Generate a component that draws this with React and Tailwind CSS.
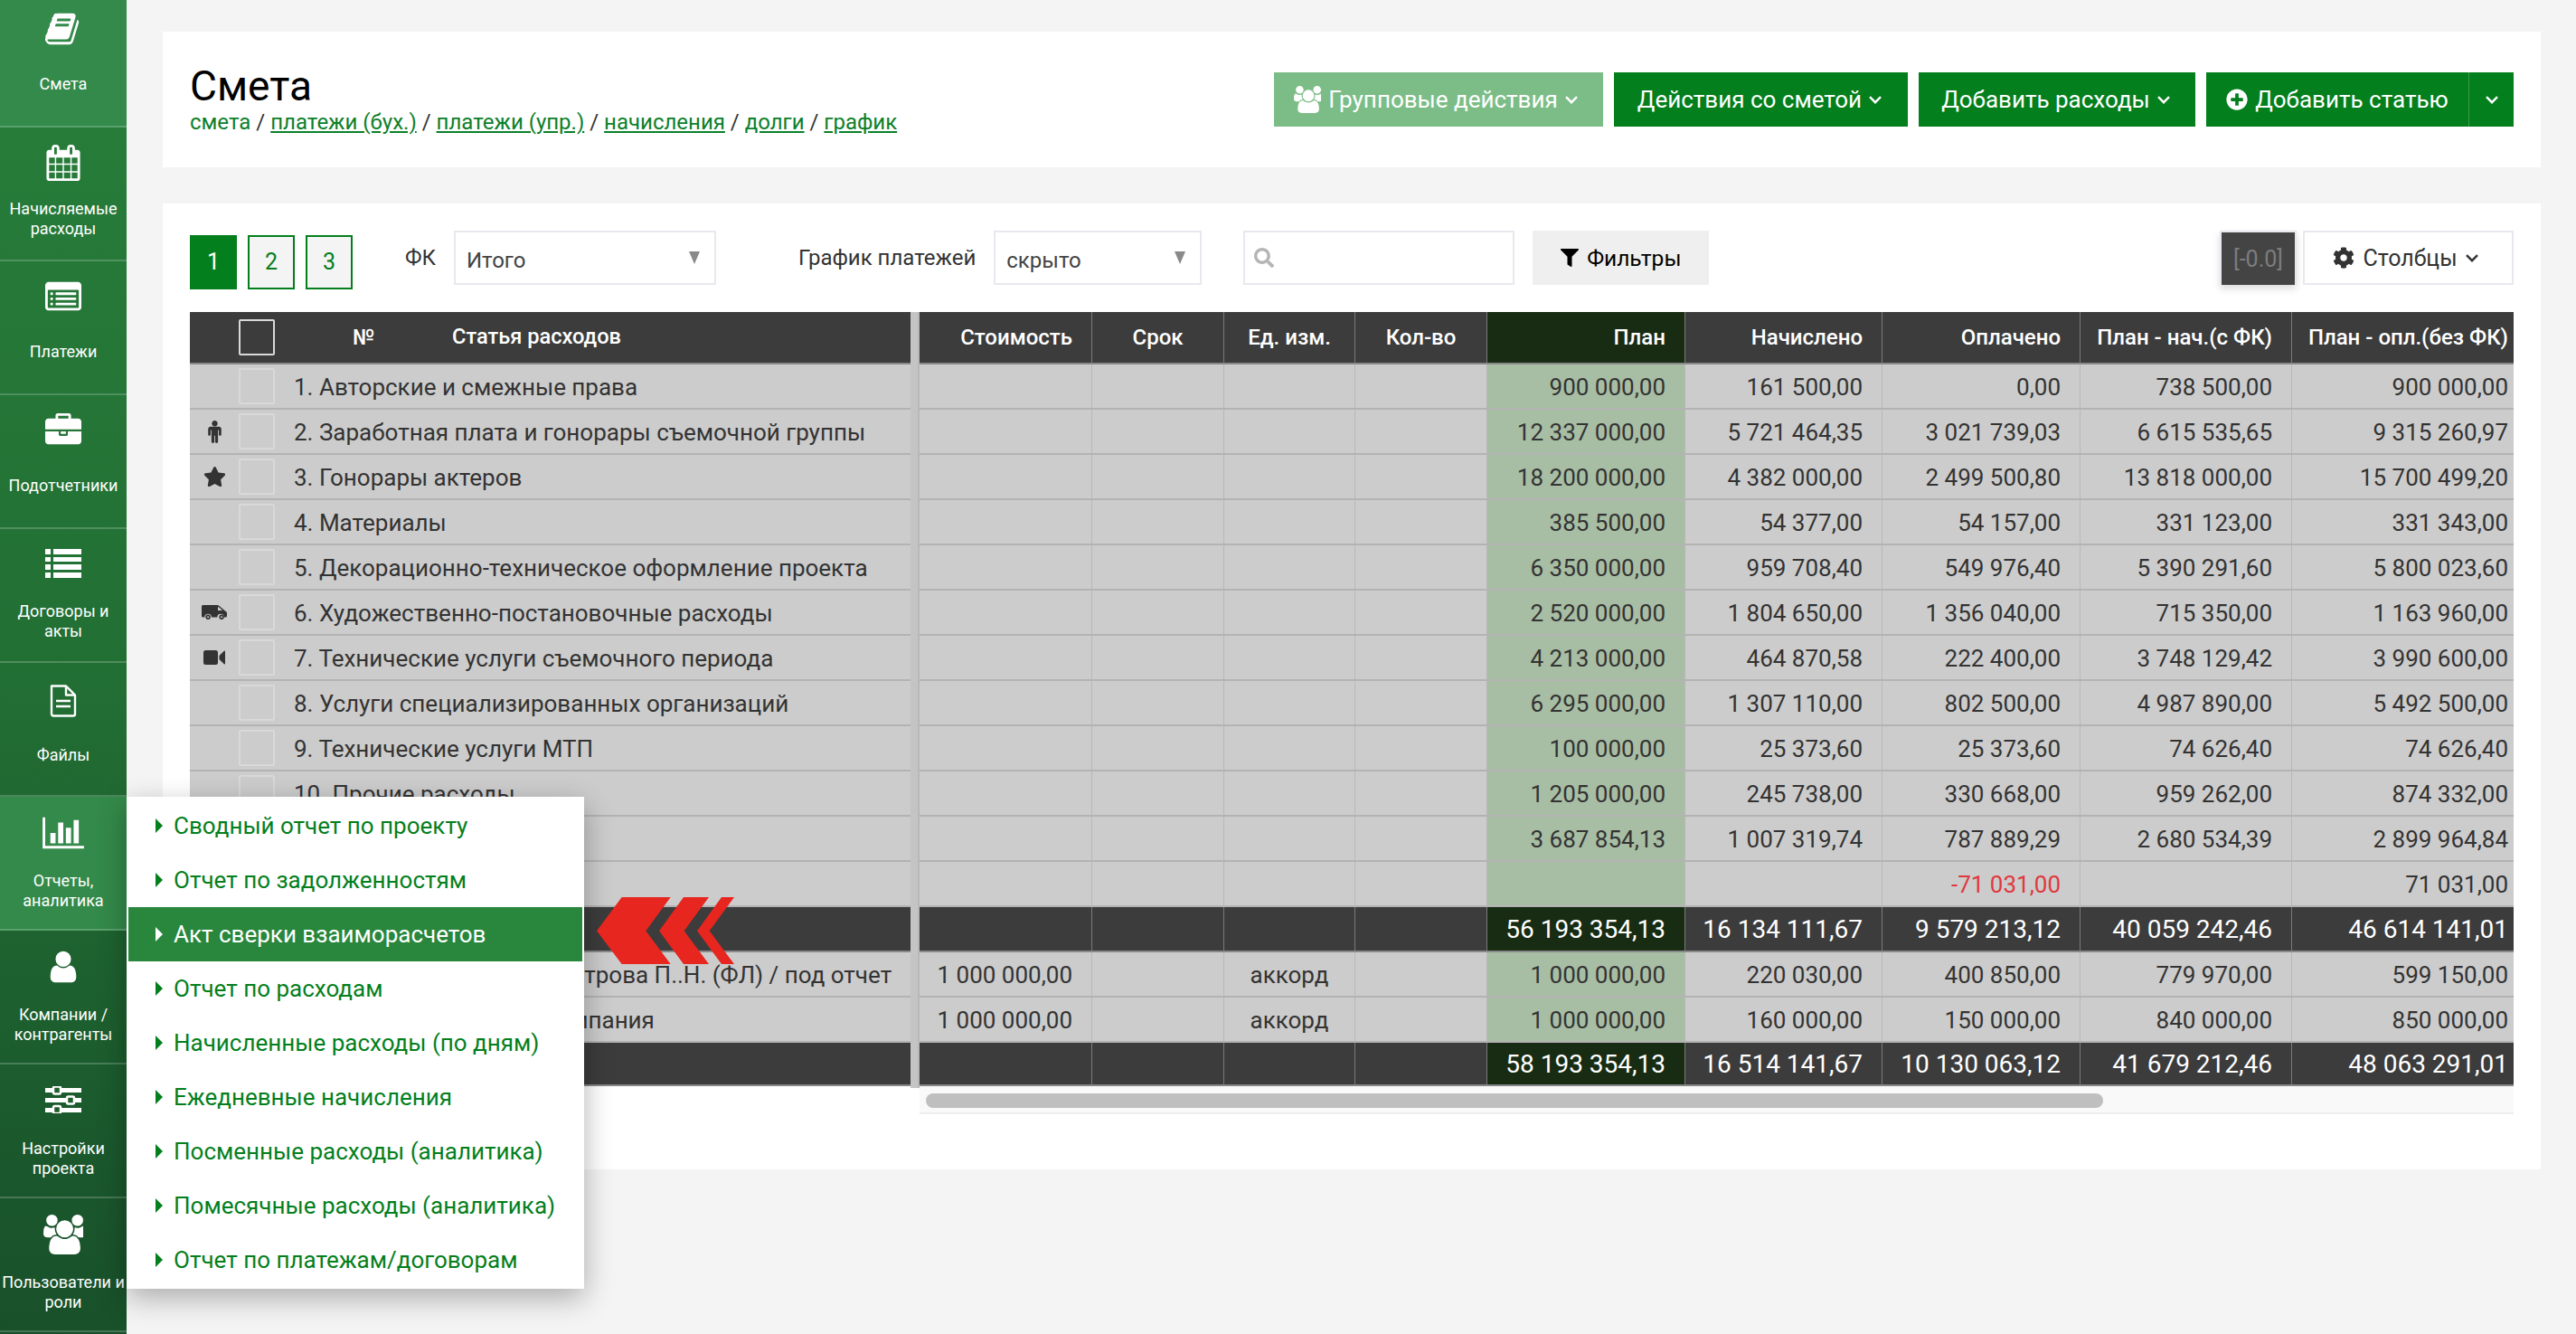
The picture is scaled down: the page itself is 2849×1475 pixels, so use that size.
import React from "react";
import { FaStar, FaFilter, FaCog, FaPlusCircle, FaSearch } from "react-icons/fa";

const P = {
  book: "M1639 478q40 57 18 129l-275 906q-19 64-76.5 107.5t-122.5 43.5h-923q-77 0-148.5-53.5t-99.5-131.5q-24-67-2-127 0-4 3-27t4-37q1-8-3-21.5t-3-19.5q2-11 8-21t16.5-23.5 16.5-23.5q23-38 45-91.5t30-91.5q3-10 .5-30t-.5-28q3-11 17-28t17-23q21-36 42-92t25-90q1-9-2.5-32t.5-28q4-13 22-30.5t22-22.5q19-26 42.5-84.5t27.5-96.5q1-8-3-25.5t-2-26.5q2-8 9-18t18-23 17-21q8-12 16.5-30.5t15-35 16-36 19.5-32 26.5-23.5 36-11.5 47.5 5.5l-1 3q38-9 51-9h761q74 0 114 56t18 130l-274 906q-36 119-71.5 153.5t-128.5 34.5h-869q-27 0-38 15-11 16-1 43 24 70 144 70h923q29 0 56-15.5t35-41.5l300-987q7-22 5-57 38 15 59 43zm-1064 2q-4 13 2 22.5t20 9.5h608q13 0 25.5-9.5t16.5-22.5l21-64q4-13-2-22.5t-20-9.5h-608q-13 0-25.5 9.5t-16.5 22.5zm-83 256q-4 13 2 22.5t20 9.5h608q13 0 25.5-9.5t16.5-22.5l21-64q4-13-2-22.5t-20-9.5h-608q-13 0-25.5 9.5t-16.5 22.5z",
  calendar: "M192 1664h288v-288h-288v288zm352 0h320v-288h-320v288zm-352-352h288v-320h-288v320zm352 0h320v-320h-320v320zm-352-384h288v-288h-288v288zm736 736h320v-288h-320v288zm-384-736h320v-288h-320v288zm768 736h288v-288h-288v288zm-384-352h320v-320h-320v320zm-352-864v-288q0-13-9.5-22.5t-22.5-9.5h-64q-13 0-22.5 9.5t-9.5 22.5v288q0 13 9.5 22.5t22.5 9.5h64q13 0 22.5-9.5t9.5-22.5zm736 864h288v-320h-288v320zm-384-384h320v-288h-320v288zm384 0h288v-288h-288v288zm32-480v-288q0-13-9.5-22.5t-22.5-9.5h-64q-13 0-22.5 9.5t-9.5 22.5v288q0 13 9.5 22.5t22.5 9.5h64q13 0 22.5-9.5t9.5-22.5zm384-64v1280q0 52-38 90t-90 38h-1408q-52 0-90-38t-38-90v-1280q0-52 38-90t90-38h128v-96q0-66 47-113t113-47h64q66 0 113 47t47 113v96h384v-96q0-66 47-113t113-47h64q66 0 113 47t47 113v96h128q52 0 90 38t38 90z",
  listAlt: "M384 1184v64q0 13-9.5 22.5t-22.5 9.5h-64q-13 0-22.5-9.5t-9.5-22.5v-64q0-13 9.5-22.5t22.5-9.5h64q13 0 22.5 9.5t9.5 22.5zm0-256v64q0 13-9.5 22.5t-22.5 9.5h-64q-13 0-22.5-9.5t-9.5-22.5v-64q0-13 9.5-22.5t22.5-9.5h64q13 0 22.5 9.5t9.5 22.5zm0-256v64q0 13-9.5 22.5t-22.5 9.5h-64q-13 0-22.5-9.5t-9.5-22.5v-64q0-13 9.5-22.5t22.5-9.5h64q13 0 22.5 9.5t9.5 22.5zm1152 512v64q0 13-9.5 22.5t-22.5 9.5h-960q-13 0-22.5-9.5t-9.5-22.5v-64q0-13 9.5-22.5t22.5-9.5h960q13 0 22.5 9.5t9.5 22.5zm0-256v64q0 13-9.5 22.5t-22.5 9.5h-960q-13 0-22.5-9.5t-9.5-22.5v-64q0-13 9.5-22.5t22.5-9.5h960q13 0 22.5 9.5t9.5 22.5zm0-256v64q0 13-9.5 22.5t-22.5 9.5h-960q-13 0-22.5-9.5t-9.5-22.5v-64q0-13 9.5-22.5t22.5-9.5h960q13 0 22.5 9.5t9.5 22.5zm128 704v-832q0-13-9.5-22.5t-22.5-9.5h-1472q-13 0-22.5 9.5t-9.5 22.5v832q0 13 9.5 22.5t22.5 9.5h1472q13 0 22.5-9.5t9.5-22.5zm128-1088v1088q0 66-47 113t-113 47h-1472q-66 0-113-47t-47-113v-1088q0-66 47-113t113-47h1472q66 0 113 47t47 113z",
  briefcase: "M640 256h512v-128h-512v128zm1152 640v480q0 66-47 113t-113 47h-1472q-66 0-113-47t-47-113v-480h672v160q0 26 19 45t45 19h320q26 0 45-19t19-45v-160h672zm-768 0v128h-256v-128h256zm768-480v384h-1792v-384q0-66 47-113t113-47h352v-160q0-40 28-68t68-28h576q40 0 68 28t28 68v160h352q66 0 113 47t47 113z",
  user: "M1536 1399q0 109-62.5 187t-150.5 78h-854q-88 0-150.5-78t-62.5-187q0-85 8.5-160.5t31.5-152 58.5-131 94-89 134.5-34.5q131 128 313 128t313-128q76 0 134.5 34.5t94 89 58.5 131 31.5 152 8.5 160.5zm-256-887q0 159-112.5 271.5t-271.5 112.5-271.5-112.5-112.5-271.5 112.5-271.5 271.5-112.5 271.5 112.5 112.5 271.5z",
  users: "M593 896q-162 5-265 128h-134q-82 0-138-40.5t-56-118.5q0-353 124-353 6 0 43.5 21t97.5 42.5 119 21.5q67 0 133-23-5 37-5 66 0 139 81 256zm1071 637q0 120-73 189.5t-194 69.5h-874q-121 0-194-69.5t-73-189.5q0-53 3.5-103.5t14-109 26.5-108.5 43-97.5 62-81 85.5-53.5 111.5-20q10 0 43 21.5t73 48 107 48 135 21.5 135-21.5 107-48 73-48 43-21.5q61 0 111.5 20t85.5 53.5 62 81 43 97.5 26.5 108.5 14 109 3.5 103.5zm-1024-1277q0 106-75 181t-181 75-181-75-75-181 75-181 181-75 181 75 75 181zm704 384q0 159-112.5 271.5t-271.5 112.5-271.5-112.5-112.5-271.5 112.5-271.5 271.5-112.5 271.5 112.5 112.5 271.5zm576 225q0 78-56 118.5t-138 40.5h-134q-103-123-265-128 81-117 81-256 0-29-5-66 66 23 133 23 59 0 119-21.5t97.5-42.5 43.5-21q124 0 124 353zm-128-609q0 106-75 181t-181 75-181-75-75-181 75-181 181-75 181 75 75 181z",
  chart: "M640 896v512h-256v-512h256zm384-512v1024h-256v-1024h256zm1024 1152v128h-2048v-1536h128v1408h1920zm-640-896v768h-256v-768h256zm384-384v1152h-256v-1152h256z",
  male: "M1024 832v416q0 40-28 68t-68 28-68-28-28-68v-352h-64v912q0 46-33 79t-79 33-79-33-33-79v-464h-64v464q0 46-33 79t-79 33-79-33-33-79v-912h-64v352q0 40-28 68t-68 28-68-28-28-68v-416q0-80 56-136t136-56h640q80 0 136 56t56 136zm-288-448q0 93-65.5 158.5t-158.5 65.5-158.5-65.5-65.5-158.5 65.5-158.5 158.5-65.5 158.5 65.5 65.5 158.5z",
};

const Fa = ({ d, box = "0 0 1792 1792", cls }) => (
  <svg viewBox={box} className={cls} fill="currentColor"><path d={d} /></svg>
);

const Chevron = ({ cls = "" }) => (
  <svg viewBox="0 0 14 9" className={"w-[14px] h-[9px] " + cls} fill="none" stroke="currentColor" strokeWidth="2.400"><path d="M1 1.200l6 6 6-6" /></svg>
);

const IconList = ({ cls }) => (
  <svg viewBox="0 0 40 32" className={cls} fill="currentColor">
    <rect x="0" y="0" width="6" height="6" /><rect x="9" y="0" width="31" height="6" />
    <rect x="0" y="9" width="6" height="5" /><rect x="9" y="9" width="31" height="5" />
    <rect x="0" y="17" width="6" height="6" /><rect x="9" y="17" width="31" height="6" />
    <rect x="0" y="26" width="6" height="6" /><rect x="9" y="26" width="31" height="6" />
  </svg>
);
const IconFile = ({ cls }) => (
  <svg viewBox="0 0 30 36" className={cls} fill="none" stroke="currentColor" strokeWidth="2.400" strokeLinejoin="round">
    <path d="M2 1.500h16l10 10v21a2 2 0 0 1-2 2H4a2 2 0 0 1-2-2z" />
    <path d="M18 1.500v10h10" />
    <path d="M7 18h16M7 24h16" />
  </svg>
);
const IconSliders = ({ cls }) => (
  <svg viewBox="0 0 40 30" className={cls}>
    <rect x="0" y="2" width="40" height="5" fill="currentColor" />
    <rect x="0" y="13" width="40" height="5" fill="currentColor" />
    <rect x="0" y="24" width="40" height="5" fill="currentColor" />
    <rect x="9" y="0.500" width="8" height="8" rx="1.500" fill="#225f2e" stroke="currentColor" strokeWidth="2.500" />
    <rect x="24" y="11.500" width="8" height="8" rx="1.500" fill="#225f2e" stroke="currentColor" strokeWidth="2.500" />
    <rect x="9" y="22" width="8" height="8" rx="1.500" fill="#1f5a2b" stroke="currentColor" strokeWidth="2.500" />
  </svg>
);
const IconVan = ({ cls }) => (
  <svg viewBox="0 0 28 16" className={cls} fill="currentColor">
    <path fillRule="evenodd" d="M1.500 0H17q1.500 0 2.500 1L26 6.500q2 .8 2 2.500v3q0 1.500-1.500 1.500h-1.600a3.800 3.800 0 0 0-7.600 0H10.900a3.800 3.800 0 0 0-7.600 0H1.500Q0 13.500 0 12V1.500Q0 0 1.500 0zM18 2.300v3.700h5L19 2.300z" />
    <path fillRule="evenodd" d="M7.100 10.500a2.700 2.700 0 1 1 0 5.400 2.700 2.700 0 0 1 0-5.400zm0 1.700a1 1 0 1 0 0 2 1 1 0 0 0 0-2zM22.100 10.500a2.700 2.700 0 1 1 0 5.400 2.700 2.700 0 0 1 0-5.400zm0 1.700a1 1 0 1 0 0 2 1 1 0 0 0 0-2z" />
  </svg>
);
const IconVideo = ({ cls }) => (
  <svg viewBox="0 0 24 16" className={cls} fill="currentColor">
    <path d="M2.500 0h11A2.500 2.500 0 0 1 16 2.500v11a2.500 2.500 0 0 1-2.500 2.500h-11A2.500 2.500 0 0 1 0 13.500v-11A2.500 2.500 0 0 1 2.500 0z" />
    <path d="M17.500 6L22.800.800q1.200-.8 1.200.5v13.400q0 1.300-1.200.5L17.500 10z" />
  </svg>
);

const nav = [
  { label: ["Смета"], icon: <Fa d={P.book} cls="w-[40px] h-[40px]" />, h: "h-[141px]", pt: "pt-[12px]", gap: "mt-[30px]", active: true },
  { label: ["Начисляемые", "расходы"], icon: <Fa d={P.calendar} cls="w-[40px] h-[40px]" />, h: "h-[148px]", pt: "pt-[19px]", gap: "mt-[20px]" },
  { label: ["Платежи"], icon: <Fa d={P.listAlt} cls="w-[40px] h-[40px]" />, h: "h-[148px]", pt: "pt-[20px]", gap: "mt-[29px]" },
  { label: ["Подотчетники"], icon: <Fa d={P.briefcase} cls="w-[40px] h-[40px]" />, h: "h-[148px]", pt: "pt-[20px]", gap: "mt-[29px]" },
  { label: ["Договоры и", "акты"], icon: <IconList cls="w-[40px] h-[32px]" />, h: "h-[148px]", pt: "pt-[22px]", gap: "mt-[26px]" },
  { label: ["Файлы"], icon: <IconFile cls="w-[30px] h-[36px]" />, h: "h-[148px]", pt: "pt-[24px]", gap: "mt-[31px]" },
  { label: ["Отчеты,", "аналитика"], icon: <Fa d={P.chart} box="0 0 2048 1792" cls="w-[46px] h-[40px]" />, h: "h-[148px]", pt: "pt-[20px]", gap: "mt-[22px]", active: true },
  { label: ["Компании /", "контрагенты"], icon: <Fa d={P.user} cls="w-[40px] h-[40px]" />, h: "h-[148px]", pt: "pt-[20px]", gap: "mt-[22px]" },
  { label: ["Настройки", "проекта"], icon: <IconSliders cls="w-[40px] h-[30px]" />, h: "h-[148px]", pt: "pt-[24px]", gap: "mt-[28px]" },
  { label: ["Пользователи и", "роли"], icon: <Fa d={P.users} cls="w-[44px] h-[44px]" />, h: "h-[148px]", pt: "pt-[18px]", gap: "mt-[20px]" },
];

const COLS = ["w-[191px]", "w-[146px]", "w-[145px]", "w-[146px]", "w-[219px]", "w-[218px]", "w-[219px]", "w-[234px]", "w-[246px]"];

const rows = [
  { t: "1. Авторские и смежные права", v: ["900 000,00", "161 500,00", "0,00", "738 500,00", "900 000,00"] },
  { t: "2. Заработная плата и гонорары съемочной группы", i: "male", v: ["12 337 000,00", "5 721 464,35", "3 021 739,03", "6 615 535,65", "9 315 260,97"] },
  { t: "3. Гонорары актеров", i: "star", v: ["18 200 000,00", "4 382 000,00", "2 499 500,80", "13 818 000,00", "15 700 499,20"] },
  { t: "4. Материалы", v: ["385 500,00", "54 377,00", "54 157,00", "331 123,00", "331 343,00"] },
  { t: "5. Декорационно-техническое оформление проекта", v: ["6 350 000,00", "959 708,40", "549 976,40", "5 390 291,60", "5 800 023,60"] },
  { t: "6. Художественно-постановочные расходы", i: "truck", v: ["2 520 000,00", "1 804 650,00", "1 356 040,00", "715 350,00", "1 163 960,00"] },
  { t: "7. Технические услуги съемочного периода", i: "video", v: ["4 213 000,00", "464 870,58", "222 400,00", "3 748 129,42", "3 990 600,00"] },
  { t: "8. Услуги специализированных организаций", v: ["6 295 000,00", "1 307 110,00", "802 500,00", "4 987 890,00", "5 492 500,00"] },
  { t: "9. Технические услуги МТП", v: ["100 000,00", "25 373,60", "25 373,60", "74 626,40", "74 626,40"] },
  { t: "10. Прочие расходы", v: ["1 205 000,00", "245 738,00", "330 668,00", "959 262,00", "874 332,00"] },
  { t: "", v: ["3 687 854,13", "1 007 319,74", "787 889,29", "2 680 534,39", "2 899 964,84"] },
  { t: "", red: true, v: ["", "", "-71 031,00", "", "71 031,00"] },
  { t: "", dark: true, v: ["56 193 354,13", "16 134 111,67", "9 579 213,12", "40 059 242,46", "46 614 141,01"] },
  { t: "Петрова П..Н. (ФЛ) / под отчет", pad: "pl-[289px]", s: "1 000 000,00", u: "аккорд", v: ["1 000 000,00", "220 030,00", "400 850,00", "779 970,00", "599 150,00"] },
  { t: "Компания", pad: "pl-[275px]", s: "1 000 000,00", u: "аккорд", v: ["1 000 000,00", "160 000,00", "150 000,00", "840 000,00", "850 000,00"] },
  { t: "", dark: true, last: true, v: ["58 193 354,13", "16 514 141,67", "10 130 063,12", "41 679 212,46", "48 063 291,01"] },
];

const rowIcons = {
  male: <Fa d={P.male} box="0 160 1024 1760" cls="w-[15px] h-[25px]" />,
  star: <FaStar className="w-[25px] h-[24px]" />,
  truck: <IconVan cls="w-[28px] h-[16px]" />,
  video: <IconVideo cls="w-[24px] h-[16px]" />,
};

const menu = [
  "Сводный отчет по проекту",
  "Отчет по задолженностям",
  "Акт сверки взаиморасчетов",
  "Отчет по расходам",
  "Начисленные расходы (по дням)",
  "Ежедневные начисления",
  "Посменные расходы (аналитика)",
  "Помесячные расходы (аналитика)",
  "Отчет по платежам/договорам",
];

const Btn = ({ children, cls }) => (
  <div className={"h-[60px] flex items-center justify-center text-white text-[26px] gap-[8px] " + cls}>{children}</div>
);

const Sel = ({ text, cls }) => (
  <div className={"h-[60px] bg-white border-2 border-[#e8e8ee] flex items-center justify-between pl-[12px] pr-[16px] text-[24px] text-[#444] " + cls}>
    <span className="pt-[6px]">{text}</span>
    <svg viewBox="0 0 12 14" className="w-[12px] h-[14px]" fill="#8a8a8a"><path d="M0 0h12L6 14z" /></svg>
  </div>
);

function LeftRow({ r }) {
  const base = r.dark
    ? "bg-[#3c3c3c] border-[#888888]"
    : "bg-[#cccccc] border-[#b3b3b3]";
  return (
    <div className={"flex items-center border-b-2 " + base + (r.last ? " h-[48px] border-b-0" : " h-[50px]")}>
      <div className="w-[54px] flex justify-center text-[#333] shrink-0">{r.i ? rowIcons[r.i] : null}</div>
      {!r.dark && <div className="w-[40px] h-[40px] shrink-0 border-2 border-[#d9d9d9] rounded-[2px]" />}
      {!r.dark && (
        <div className={"ml-[21px] pt-[2px] text-[26px] text-[#333] whitespace-nowrap " + (r.pad || "")}>{r.t}</div>
      )}
    </div>
  );
}

function RightRow({ r }) {
  const cells = [r.s || "", "", r.u || "", "", ...r.v];
  return (
    <div className={"flex border-b-2 " + (r.dark ? "border-[#888888]" : "border-[#b3b3b3]") + (r.last ? " h-[48px] border-b-0" : " h-[50px]")}>
      {cells.map((c, i) => {
        const plan = i === 4;
        const bg = r.dark ? (plan ? "bg-[#172c13]" : "bg-[#3c3c3c]") : plan ? "bg-[#a8bea4]" : "bg-[#cccccc]";
        const color = r.dark ? "text-white text-[28px] pt-[2px]" : r.red && i === 6 ? "text-[#e0383f] text-[26px] pt-[2px]" : "text-[#333] text-[26px] pt-[2px]";
        const border = r.dark ? "border-[#7a7a7a]" : "border-[#b8b8b8]";
        const align = i === 2 ? "justify-center" : "justify-end";
        const pr = i === 8 ? "pr-[6px]" : i === 2 ? "" : "pr-[21px]";
        return (
          <div key={i} className={"shrink-0 flex items-center border-r whitespace-nowrap " + COLS[i] + " " + bg + " " + color + " " + border + " " + align + " " + pr}>
            {c}
          </div>
        );
      })}
    </div>
  );
}

const headers = ["Стоимость", "Срок", "Ед. изм.", "Кол-во", "План", "Начислено", "Оплачено", "План - нач.(с ФК)", "План - опл.(без ФК)"];

export default function App() {
  return (
    <div className="relative w-full h-[1475px] overflow-hidden bg-[#f4f4f4] flex font-[Roboto,sans-serif]">
      {/* Sidebar */}
      <aside className="w-[140px] shrink-0 h-[1475px] bg-[linear-gradient(180deg,#287f3b_0%,#226f34_50%,#18502a_100%)]">
        {nav.map((n, i) => (
          <div
            key={i}
            className={"flex flex-col items-center text-white text-[18px] leading-[22px] text-center border-b-2 border-[#ffffff33] " + n.h + " " + n.pt + (n.active ? " bg-[#338a4a]" : "")}
          >
            {n.icon}
            <div className={n.gap + " whitespace-nowrap"}>
              {n.label.map((l) => (
                <div key={l}>{l}</div>
              ))}
            </div>
          </div>
        ))}
      </aside>

      {/* Main */}
      <main className="flex-1 min-w-0 pl-[40px] pr-[39px] pt-[35px] flex flex-col gap-[40px]">
        <section className="h-[150px] bg-white px-[30px] flex items-center justify-between">
          <div>
            <h1 className="text-[46px] leading-[50px] text-black">Смета</h1>
            <div className="text-[24px] leading-[30px] text-[#333]">
              <span className="text-[#0b8029]">смета</span> / <span className="text-[#0b8029] underline">платежи (бух.)</span> / <span className="text-[#0b8029] underline">платежи (упр.)</span> / <span className="text-[#0b8029] underline">начисления</span> / <span className="text-[#0b8029] underline">долги</span> / <span className="text-[#0b8029] underline">график</span>
            </div>
          </div>
          <div className="flex gap-[12px]">
            <Btn cls="w-[364px] bg-[#7cbd87] pr-[6px]">
              <Fa d={P.users} cls="w-[30px] h-[30px]" />
              <span>Групповые действия</span>
              <Chevron />
            </Btn>
            <Btn cls="w-[325px] bg-[#047f1d] pr-[3px]">
              <span>Действия со сметой</span>
              <Chevron />
            </Btn>
            <Btn cls="w-[306px] bg-[#047f1d] pr-[3px]">
              <span>Добавить расходы</span>
              <Chevron />
            </Btn>
            <div className="flex">
              <Btn cls="w-[290px] bg-[#047f1d]">
                <FaPlusCircle className="w-[24px] h-[24px]" />
                <span>Добавить статью</span>
              </Btn>
              <Btn cls="w-[50px] bg-[#047f1d] border-l border-[#3a9a4e]">
                <Chevron />
              </Btn>
            </div>
          </div>
        </section>

        <section className="bg-white px-[30px] pt-[30px] pb-[61px]">
          {/* Toolbar */}
          <div className="flex items-start h-[60px] mb-[30px]">
            <div className="flex gap-[12px] mt-[5px] text-[25px]">
              <div className="w-[52px] h-[60px] flex items-center justify-center bg-[#047f1d] text-white">1</div>
              <div className="w-[52px] h-[60px] flex items-center justify-center bg-[#f4f4f4] border-2 border-[#047f1d] text-[#047f1d]">2</div>
              <div className="w-[52px] h-[60px] flex items-center justify-center bg-[#f4f4f4] border-2 border-[#047f1d] text-[#047f1d]">3</div>
            </div>
            <div className="ml-[58px] h-[60px] flex items-center text-[24px] text-[#333]">ФК</div>
            <Sel text="Итого" cls="w-[290px] ml-[20px]" />
            <div className="ml-[91px] h-[60px] flex items-center text-[24px] text-[#333] whitespace-nowrap">График платежей</div>
            <Sel text="скрыто" cls="w-[230px] ml-[20px]" />
            <div className="ml-[46px] w-[300px] h-[60px] bg-white border-2 border-[#e8e8ee] flex items-center pl-[10px] text-[#b5b5b5]">
              <FaSearch className="w-[22px] h-[22px]" />
            </div>
            <div className="ml-[20px] w-[195px] h-[60px] bg-[#efefef] flex items-center justify-center gap-[9px] text-[24.500px] text-black">
              <FaFilter className="w-[20px] h-[20px]" />
              <span className="pt-[2px]">Фильтры</span>
            </div>
            <div className="ml-auto w-[85px] h-[60px] pt-[2px] bg-[#444444] border-2 border-[#e8e8ee] border-b-0 flex items-center justify-center text-[25px] text-[#7d7d7d] shadow-[0_4px_8px_rgba(0,0,0,0.15)]">[-0.0]</div>
            <div className="ml-[7px] w-[233px] h-[60px] pr-[6px] bg-white border-2 border-[#e8e8ee] flex items-center justify-center gap-[9px] text-[25px] text-[#333]">
              <FaCog className="w-[24px] h-[24px]" />
              <span className="pt-[2px]">Столбцы</span>
              <Chevron />
            </div>
          </div>

          {/* Table */}
          <div className="flex items-start">
            <div className="w-[797px] shrink-0">
              <div className="h-[58px] bg-[#3c3c3c] border-b-2 border-[#888888] flex items-center text-white text-[24px] font-medium">
                <div className="w-[54px] shrink-0" />
                <div className="w-[40px] h-[40px] shrink-0 border-2 border-[#d9d9d9] rounded-[2px]" />
                <div className="ml-[83px] w-[30px] text-center">№</div>
                <div className="ml-[83px] whitespace-nowrap text-[23.600px]">Статья расходов</div>
              </div>
              {rows.map((r, i) => (
                <LeftRow key={i} r={r} />
              ))}
            </div>
            <div className="w-[10px] h-[858px] shrink-0 bg-[#c4c4c4] border-r-2 border-[#b8b8b8]" />
            <div className="flex-1 min-w-0 overflow-hidden">
              <div className="flex h-[58px] border-b-2 border-[#888888]">
                {headers.map((h, i) => (
                  <div
                    key={h}
                    className={
                      "shrink-0 flex items-center border-r border-[#7a7a7a] text-white text-[24px] font-medium whitespace-nowrap " +
                      COLS[i] + " " +
                      (i === 4 ? "bg-[#172c13] " : "bg-[#3c3c3c] ") +
                      (i > 0 && i < 4 ? "justify-center" : i === 8 ? "justify-end pr-[6px]" : "justify-end pr-[21px]")
                    }
                  >
                    {h}
                  </div>
                ))}
              </div>
              {rows.map((r, i) => (
                <RightRow key={i} r={r} />
              ))}
              <div className="h-[31px] bg-[#f9f9f9] border-b-2 border-[#eeeeee] pt-[8px] pl-[7px]">
                <div className="w-[1302px] h-[16px] rounded-[8px] bg-[#bfbfbf]" />
              </div>
            </div>
          </div>
        </section>
      </main>

      {/* Dropdown */}
      <div className="absolute left-[140px] top-[881px] w-[506px] bg-white py-[2px] px-[2px] shadow-[0_10px_30px_rgba(0,0,0,0.3)]">
        {menu.map((m, i) => (
          <div
            key={m}
            className={"h-[60px] flex items-center pl-[30px] text-[26px] whitespace-nowrap " + (i === 2 ? "bg-[#28873d] text-white" : "text-[#047f1d]")}
          >
            <svg viewBox="0 0 8 16" className="w-[8px] h-[16px] mr-[12px]" fill="currentColor"><path d="M0 0l8 8-8 8z" /></svg>
            {m}
          </div>
        ))}
      </div>

      {/* Red chevrons */}
      <svg className="absolute left-[640px] top-[960px] w-[200px] h-[130px]" viewBox="0 0 600 390" fill="#e6261f">
        <path d="M60 208L143 96H305L223 208L305 318H143z" />
        <path d="M267 208L348 96H432L350 208L432 318H348z" />
        <path d="M393 208L474 96H516L434 208L516 318H474z" />
      </svg>
    </div>
  );
}
